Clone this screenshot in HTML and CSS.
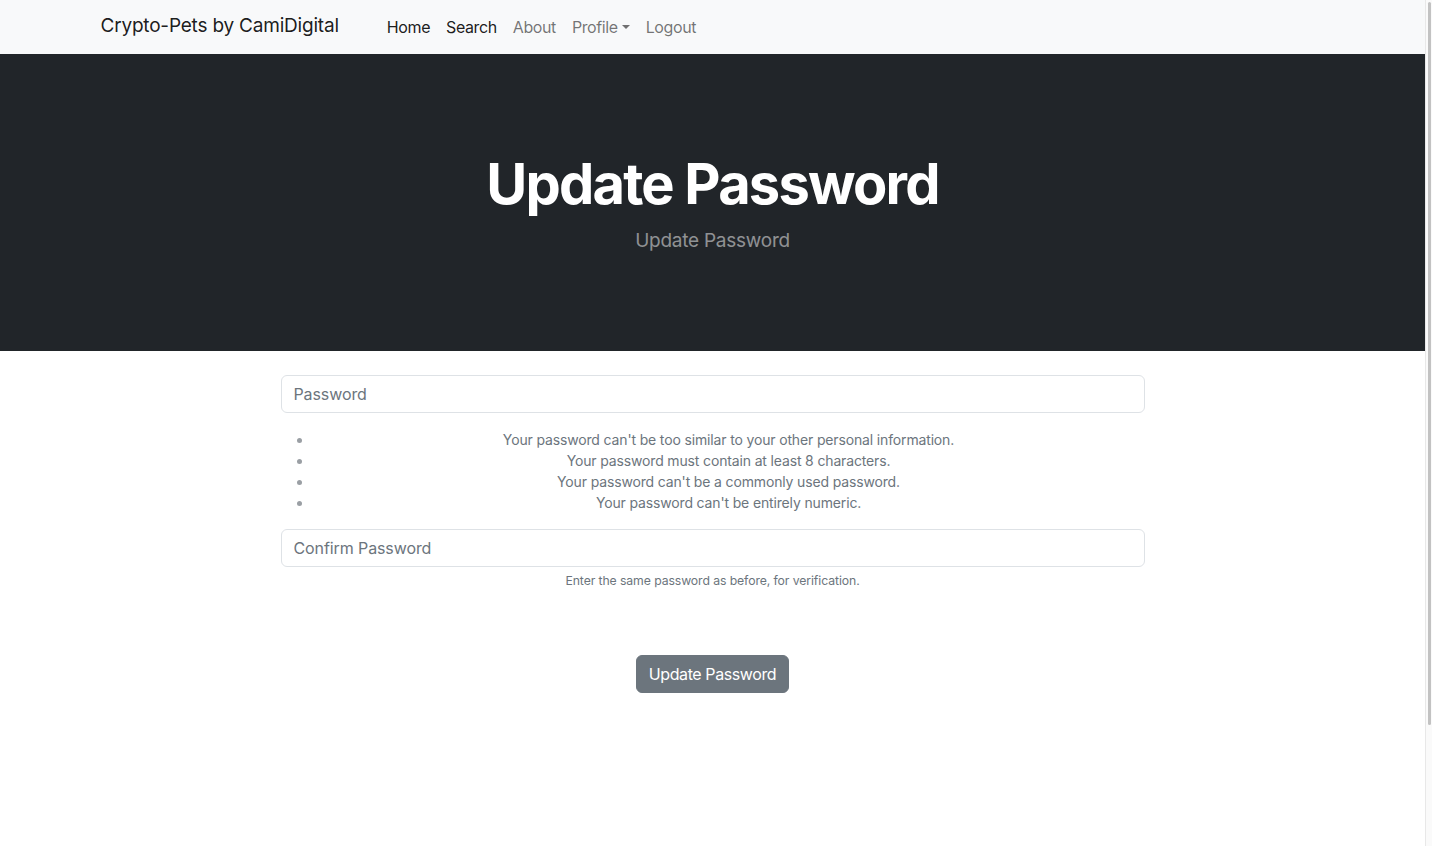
FILE: index.html
```html
<!DOCTYPE html>
<html lang="en">
<head>
<meta charset="utf-8">
<title>Update Password</title>
<link rel="stylesheet" href="styles.css">
</head>
<body>
<div class="page">
  <nav class="navbar">
    <div class="nav-container">
      <a class="brand" href="#">Crypto-Pets by CamiDigital</a>
      <ul class="nav-links">
        <li><a class="nav-link active" href="#">Home</a></li>
        <li><a class="nav-link active" href="#">Search</a></li>
        <li><a class="nav-link" href="#">About</a></li>
        <li><a class="nav-link dropdown-toggle" href="#">Profile</a></li>
        <li><a class="nav-link" href="#">Logout</a></li>
      </ul>
    </div>
  </nav>

  <header class="hero">
    <h1 class="hero-title">Update Password</h1>
    <p class="hero-lead">Update Password</p>
  </header>

  <main class="form-wrap">
    <form class="pw-form">
      <input class="form-control" type="password" placeholder="Password">
      <div class="help-list">
        <ul>
          <li>Your password can't be too similar to your other personal information.</li>
          <li>Your password must contain at least 8 characters.</li>
          <li>Your password can't be a commonly used password.</li>
          <li>Your password can't be entirely numeric.</li>
        </ul>
      </div>
      <input class="form-control" type="password" placeholder="Confirm Password">
      <div class="help-text">Enter the same password as before, for verification.</div>
      <div class="btn-row">
        <button class="btn" type="button">Update Password</button>
      </div>
    </form>
  </main>
</div>
<div class="scrollbar"><div class="scroll-thumb"></div></div>
</body>
</html>
```

FILE: styles.css
```css
* {
  box-sizing: border-box;
}
body {
  margin: 0;
  font-family: Inter, "Noto Sans", "Liberation Sans", sans-serif;
  font-size: 16px;
  line-height: 1.5;
  color: #212529;
  background: #fff;
  overflow: hidden;
}
.page {
  width: calc(100% - 7px);
}
a {
  text-decoration: none;
}

/* Fake scrollbar (overlay on the right edge) */
.scrollbar {
  position: fixed;
  top: 0;
  right: 0;
  width: 7px;
  height: 100vh;
  background: #fafafa;
  border-left: 1px solid #e8e8e8;
  padding: 2px 1px 0 2px;
}
.scroll-thumb {
  height: 723px;
  background: #c2c2c2;
  border-radius: 2px;
}

/* Navbar */
.navbar {
  background: #f8f9fa;
  height: 54px;
  display: flex;
  align-items: center;
  padding-bottom: 1px;
}
.nav-container {
  width: 100%;
  max-width: 1320px;
  margin: 0 auto;
  padding: 0 48px;
  display: flex;
  align-items: center;
}
.brand {
  font-size: 19px;
  color: rgba(0, 0, 0, 0.9);
  margin-right: 16px;
  letter-spacing: -0.2px;
}
.nav-links {
  list-style: none;
  margin: 0 0 0 24px;
  padding: 0;
  display: flex;
}
.nav-link {
  display: block;
  padding: 8px 8px;
  color: rgba(0, 0, 0, 0.55);
  font-size: 16px;
  letter-spacing: -0.4px;
}
.nav-link.active {
  color: rgba(0, 0, 0, 0.9);
}
.dropdown-toggle::after {
  content: "";
  display: inline-block;
  margin-left: 4px;
  vertical-align: 4px;
  border-top: 4.8px solid;
  border-left: 4.8px solid transparent;
  border-right: 4.8px solid transparent;
}

/* Hero */
.hero {
  background: #212529;
  padding: 97px 0 95px;
  text-align: center;
}
.hero-title {
  margin: 0 0 8px;
  font-size: 56px;
  line-height: 1.2;
  font-weight: 700;
  color: #fff;
  letter-spacing: -1.8px;
}
.hero-lead {
  margin: 0;
  font-size: 19px;
  line-height: 30px;
  color: rgba(255, 255, 255, 0.5);
  letter-spacing: -0.25px;
}

/* Form */
.form-wrap {
  display: flex;
  justify-content: center;
  padding-top: 24px;
}
.pw-form {
  width: 864px;
}
.form-control {
  display: block;
  width: 100%;
  height: 38px;
  padding: 6px 12px;
  font-family: inherit;
  font-size: 16px;
  color: #212529;
  background: #fff;
  border: 1px solid #dee2e6;
  border-radius: 6px;
  outline: none;
}
.form-control::placeholder {
  color: #6c757d;
  letter-spacing: -0.1px;
}
.help-list {
  margin-top: 16px;
  font-size: 14px;
  line-height: 21px;
  color: #6c757d;
  text-align: center;
  letter-spacing: -0.15px;
}
.help-list ul {
  margin: 0 0 16px;
  padding-left: 32px;
}
.help-list li::marker {
  color: #9a9fa4;
}
.help-text {
  margin-top: 5px;
  font-size: 12.25px;
  line-height: 18px;
  color: #6c757d;
  text-align: center;
  letter-spacing: -0.1px;
}
.btn-row {
  display: flex;
  justify-content: center;
  margin-top: 65px;
}
.btn {
  font-family: inherit;
  font-size: 16px;
  line-height: 24px;
  padding: 6px 12px;
  color: #fff;
  background: #6c757d;
  border: 1px solid #6c757d;
  border-radius: 6px;
  letter-spacing: -0.4px;
}
```
